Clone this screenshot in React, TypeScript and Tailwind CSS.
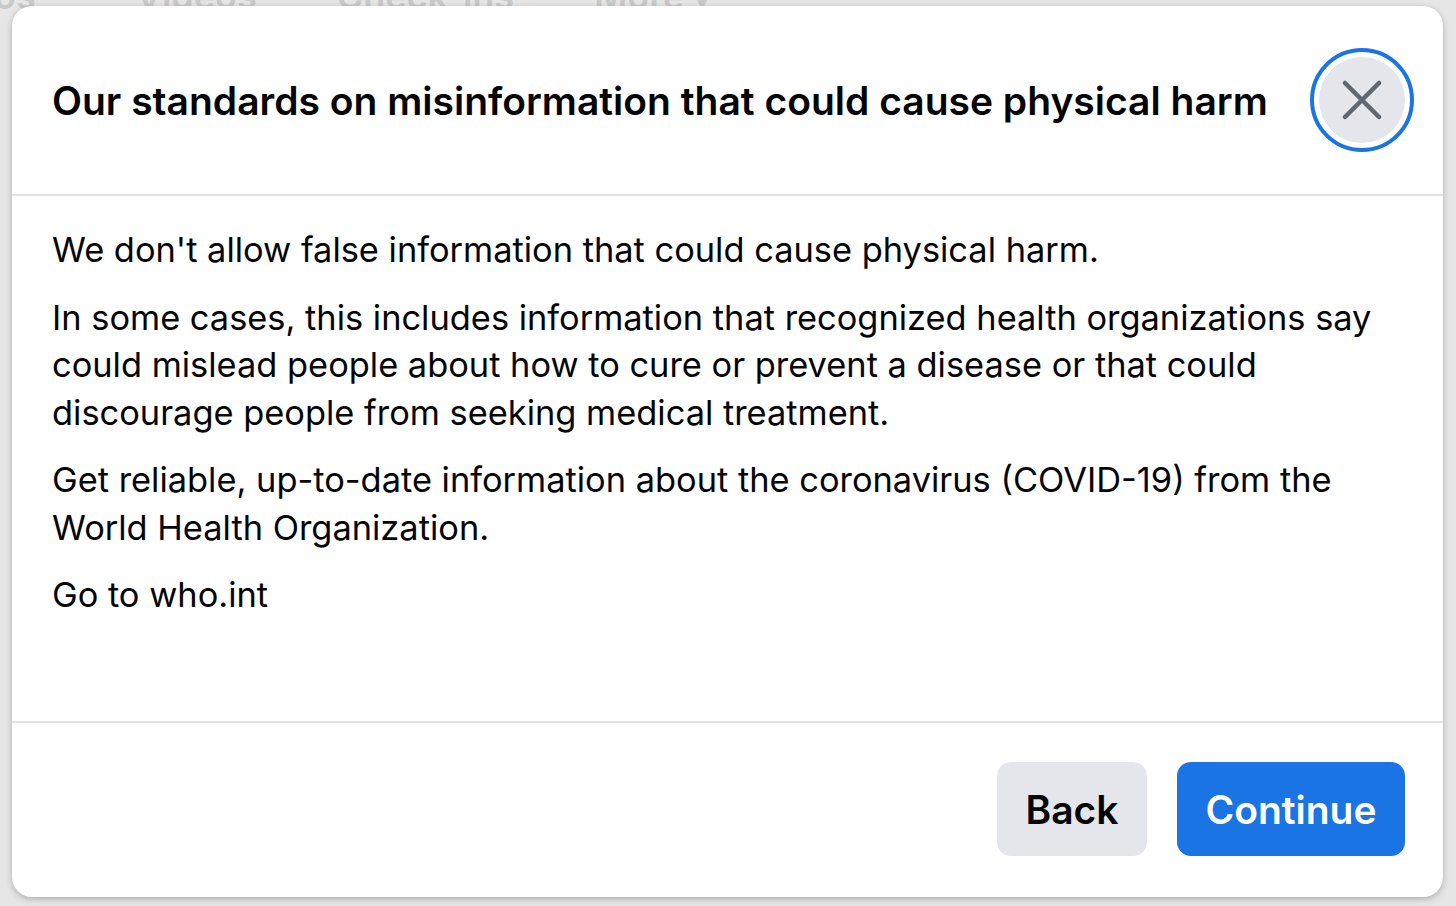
import React from "react";

export default function App() {
  return (
    <div className="relative h-[906px] w-[1456px] overflow-hidden bg-[#e6e6e6] font-['Inter',sans-serif]">
      {/* dimmed page behind */}
      <div className="flex h-[60px] items-start gap-[80px] pl-[104px] text-[36px] leading-none text-[#c9c9c9] -mt-[22px] font-semibold">
        <span className="-ml-[110px] mr-[20px]">os</span>
        <span>Videos</span>
        <span>Check-ins</span>
        <span>More ▾</span>
      </div>

      {/* dialog */}
      <div className="absolute left-[12px] top-[6px] flex h-[891px] w-[1431px] flex-col rounded-[20px] bg-white shadow-[0_2px_6px_rgba(0,0,0,0.25)]">
        <div className="flex h-[190px] items-center justify-between border-b-2 border-[#e0e2e6] pl-[40px] pr-[29px]">
          <h1 className="pt-[2px] text-[39px] font-semibold text-[#050505]">
            Our standards on misinformation that could cause physical harm
          </h1>
          <div className="flex h-[104px] w-[104px] shrink-0 items-center justify-center rounded-full border-[4px] border-[#1b74e4]">
            <div className="flex h-[86px] w-[86px] items-center justify-center rounded-full bg-[#e4e6eb]">
              <svg width="40" height="40" viewBox="0 0 40 40" fill="none">
                <path d="M3 3L37 37M37 3L3 37" stroke="#606770" strokeWidth="4.5" strokeLinecap="round" />
              </svg>
            </div>
          </div>
        </div>

        <div className="flex h-[527px] flex-col gap-[20px] border-b-2 border-[#e0e2e6] pl-[40px] pr-[40px] pt-[30px] text-[34.4px] leading-[47.5px] text-[#050505]">
          <p>We don't allow false information that could cause physical harm.</p>
          <p>
            In some cases, this includes information that recognized health organizations say could mislead people about how to cure or prevent a disease or that could discourage people from seeking medical treatment.
          </p>
          <p>
            Get reliable, up-to-date information about the coronavirus (COVID-19) from the World Health Organization.
          </p>
          <p>Go to who.int</p>
        </div>

        <div className="flex flex-1 items-start justify-end gap-[30px] pr-[38px] pt-[39px]">
          <button className="h-[94px] w-[150px] rounded-[14px] bg-[#e4e6eb] pt-[3px] text-[39px] font-semibold text-[#050505]">
            Back
          </button>
          <button className="h-[94px] w-[228px] rounded-[14px] bg-[#1b74e4] pt-[3px] text-[39px] font-semibold text-white">
            Continue
          </button>
        </div>
      </div>
    </div>
  );
}
